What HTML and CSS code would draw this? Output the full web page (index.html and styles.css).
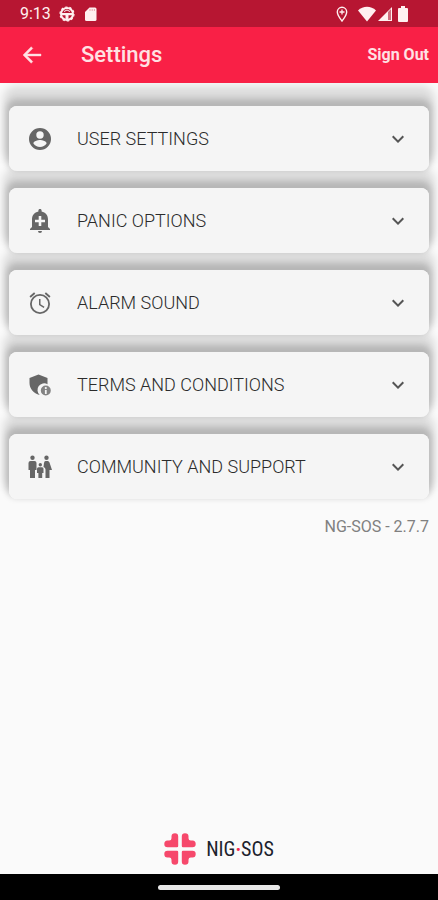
FILE: index.html
```html
<!DOCTYPE html>
<html lang="en">
<head>
<meta charset="utf-8">
<meta name="viewport" content="width=device-width, initial-scale=1">
<title>Settings</title>
<link rel="stylesheet" href="styles.css">
</head>
<body>
<div class="status-bar">
  <div class="status-group">
    <span class="clock">9:13</span>
    <svg class="status-icon" viewBox="0 0 16 16" aria-hidden="true"><circle cx="8" cy="8" r="6" fill="none" stroke="currentColor" stroke-width="2"/><circle cx="8" cy="8" r="7" fill="none" stroke="currentColor" stroke-width="1.2" stroke-dasharray="2.4 2"/><path d="M2.500 7h11v2.300H9.500V13.500h-3V9.300h-4z" fill="currentColor"/><path d="M5 5.500 8 4l3 1.500" fill="none" stroke="currentColor"/></svg>
    <svg class="status-icon" viewBox="0 0 16 16" aria-hidden="true"><path d="M6.500 1.500H12q1.500 0 1.500 1.500v10.500q0 1.500-1.500 1.500H3.500Q2 15 2 13.500V6z" fill="currentColor"/><path d="M7 3v2M9.200 3v2M11.400 3v2" stroke="#e9a5ae"/></svg>
  </div>
  <div class="status-group right">
    <svg class="status-icon" viewBox="0 0 16 16" aria-hidden="true"><path d="M8 15C5.500 11.500 3.300 9 3.300 6a4.700 4.700 0 0 1 9.400 0c0 3-2.200 5.500-4.700 9z" fill="none" stroke="currentColor" stroke-width="1.400"/><path d="M8 3.500v5M5.500 6h5" stroke="currentColor" stroke-width="1.300"/></svg>
    <svg class="wifi" viewBox="0 0 18 16" aria-hidden="true"><path d="M0 4.500C5-.5 13-.5 18 4.500L9 15.500z" fill="currentColor"/></svg>
    <svg class="status-icon" viewBox="0 0 16 16" aria-hidden="true"><path d="M1 15 15 1v14z" fill="currentColor"/><path d="M11 6v8h3V3z" fill="#cf6d7d"/></svg>
    <svg class="battery" viewBox="0 0 12 16" aria-hidden="true"><path d="M4 0h4v2h2q1 0 1 1v12q0 1-1 1H2q-1 0-1-1V3q0-1 1-1h2z" fill="currentColor"/></svg>
  </div>
</div>
<header class="app-bar">
  <button class="back" type="button" aria-label="Back"><svg viewBox="0 0 24 24" aria-hidden="true"><path d="M21 11H7.200l5.600-5.600L11.200 3.700 3 12l8.200 8.300 1.600-1.700L7.200 13H21z" fill="currentColor" stroke="currentColor" stroke-width=".4"/></svg></button>
  <h1>Settings</h1>
  <button class="sign-out" type="button">Sign Out</button>
</header>
<main>
  <div class="cards">
    <button class="card" type="button" aria-expanded="false">
      <svg class="icon" viewBox="0 0 24 24" aria-hidden="true"><path d="M12 1a11 11 0 1 0 0 22 11 11 0 0 0 0-22zm0 3.300a3.700 3.700 0 1 1 0 7.400 3.700 3.700 0 0 1 0-7.400zm0 15.700a8 8 0 0 1-6.600-3.500c0-2.200 4.400-3.400 6.600-3.400s6.600 1.200 6.600 3.400A8 8 0 0 1 12 20z"/></svg>
      <span class="label">USER SETTINGS</span>
      <svg class="chevron" viewBox="0 0 24 24" aria-hidden="true"><path d="M16.590 8.590 12 13.170 7.410 8.590 6 10l6 6 6-6z"/></svg>
    </button>
    <button class="card" type="button" aria-expanded="false">
      <svg class="icon" viewBox="0 0 24 24" aria-hidden="true"><path fill-rule="evenodd" d="M12 0c-1 0-1.600.7-1.600 1.600v1C6.500 3.400 4 6.500 4 10.500V18l-2 2v1h20v-1l-2-2v-7.500c0-4-2.500-7.100-6.400-7.900v-1C13.600.7 13 0 12 0zM10.700 7h2.600v3.700H17v2.600h-3.700V17h-2.600v-3.700H7v-2.600h3.700zM10 22a2 2 0 0 0 4 0z"/></svg>
      <span class="label">PANIC OPTIONS</span>
      <svg class="chevron" viewBox="0 0 24 24" aria-hidden="true"><path d="M16.590 8.590 12 13.170 7.410 8.590 6 10l6 6 6-6z"/></svg>
    </button>
    <button class="card" type="button" aria-expanded="false">
      <svg class="icon" viewBox="0 0 24 24" aria-hidden="true"><path d="m22.500 5.200-4.600-3.900-1.200 1.500 4.600 3.900zM7.300 2.800 6.100 1.300 1.500 5.200l1.200 1.500zM12.500 8H11v6l4.700 2.900.8-1.200-4-2.400zM12 3a10 10 0 1 0 0 20 10 10 0 0 0 0-20zm0 18.200a8.200 8.200 0 1 1 0-16.400 8.200 8.200 0 0 1 0 16.400z"/></svg>
      <span class="label">ALARM SOUND</span>
      <svg class="chevron" viewBox="0 0 24 24" aria-hidden="true"><path d="M16.590 8.590 12 13.170 7.410 8.590 6 10l6 6 6-6z"/></svg>
    </button>
    <button class="card" type="button" aria-expanded="false">
      <svg class="icon" viewBox="0 0 24 24" aria-hidden="true"><path d="M10.500 1.500 19.500 5v6.200A6.700 6.700 0 0 0 11.700 22C5.500 20.300 1.500 15.500 1.500 10V5z"/><path fill-rule="evenodd" d="M17.800 12.500a5 5 0 1 0 0 10 5 5 0 0 0 0-10zm0 1.500a1.100 1.100 0 1 1 0 2.200 1.100 1.100 0 0 1 0-2.200zm-.9 3h1.800v4h-1.800z" opacity=".8"/></svg>
      <span class="label">TERMS AND CONDITIONS</span>
      <svg class="chevron" viewBox="0 0 24 24" aria-hidden="true"><path d="M16.590 8.590 12 13.170 7.410 8.590 6 10l6 6 6-6z"/></svg>
    </button>
    <button class="card" type="button" aria-expanded="false">
      <svg class="icon" viewBox="0 0 24 24" aria-hidden="true"><circle cx="4.500" cy="2.800" r="2.200"/><circle cx="18.500" cy="2.800" r="2.200"/><circle cx="12.300" cy="9.700" r="1.700"/><path d="M2.500 6h4q2 0 2 2v7H7v8H2v-8H.5V8q0-2 2-2zM17.500 6h2.200q1.300 0 1.800 1.500L24 15h-2.500v8h-4v-8.500q0-2-2-2.600L16 8q.3-2 1.500-2zM10.500 12.200H14q1.500 0 1.500 1.500V18h-1.300v5h-3.800v-5H9v-4.300q0-1.500 1.500-1.500z"/></svg>
      <span class="label">COMMUNITY AND SUPPORT</span>
      <svg class="chevron" viewBox="0 0 24 24" aria-hidden="true"><path d="M16.590 8.590 12 13.170 7.410 8.590 6 10l6 6 6-6z"/></svg>
    </button>
  </div>
  <p class="version">NG-SOS - 2.7.7</p>
</main>
<footer class="brand">
  <svg class="brand-mark" viewBox="0 0 32 32" aria-hidden="true"><defs><path id="arm" d="M14.200 3.500V13q0 1.200-1.200 1.200H3.500Q.3 14.200.3 11 .3 7.500 3.500 7.500h1.700q2.300 0 2.300-2.300V3.500Q7.500.3 11 .3q3.200 0 3.200 3.200z"/></defs><use href="#arm"/><use href="#arm" transform="matrix(-1 0 0 1 32 0)"/><use href="#arm" transform="matrix(1 0 0 -1 0 32)"/><use href="#arm" transform="rotate(180 16 16)"/></svg>
  <span class="brand-name">NIG<span class="dot">·</span>SOS</span>
</footer>
<div class="nav-bar"><span class="handle"></span></div>
</body>
</html>
```
FILE: styles.css
```css
* { box-sizing: border-box; }

body {
  margin: 0;
  min-height: 100vh;
  display: flex;
  flex-direction: column;
  background: #fafafa;
  font-family: Roboto, "Liberation Sans", sans-serif;
}

button {
  margin: 0;
  padding: 0;
  border: 0;
  background: none;
  color: inherit;
  font: inherit;
  text-align: left;
  cursor: pointer;
}

svg { display: block; flex: none; }

.status-bar {
  position: relative;
  z-index: 1;
  display: flex;
  justify-content: space-between;
  align-items: center;
  height: 27px;
  padding: 0 29px 0 20px;
  background: #b71632;
  color: #fff0f0;
}

.status-group { display: flex; align-items: center; gap: 8px; }
.status-group.right { gap: 1px; }
.status-group.right .status-icon:first-child { margin-right: 7px; }
.clock { font-size: 16px; line-height: 20px; }
.status-icon { width: 16px; height: 16px; }
.wifi { width: 18px; height: 16px; }
.battery { width: 12px; height: 16px; margin-left: 3px; }

.app-bar {
  position: relative;
  z-index: 1;
  display: flex;
  align-items: center;
  height: 56px;
  padding: 0 9px 0 20px;
  background: #f92046;
  color: #ffe1e3;
}

.back svg { width: 24px; height: 24px; }

h1 {
  flex: 1;
  margin: 0 0 0 37px;
  font-size: 22px;
  line-height: 28px;
  font-weight: 500;
}

.sign-out { font-size: 16px; line-height: 20px; font-weight: 700; }

main { flex: 1; padding: 23px 9px 0; }

.cards {
  display: flex;
  flex-direction: column;
  gap: 17px;
  isolation: isolate;
}

.card {
  position: relative;
  display: flex;
  align-items: center;
  width: 100%;
  height: 65px;
  padding: 0 19px;
  border-radius: 8px;
  background: #f5f5f5;
  color: #2b2b2b;
}

/* Shadows sit behind every card so none darkens its neighbour. */
.card::before {
  content: "";
  position: absolute;
  inset: 0;
  z-index: -1;
  border-radius: 8px;
  box-shadow:
    0 -4px 6px 3px rgba(0, 0, 0, 0.17),
    0 -14px 8px 6px rgba(0, 0, 0, 0.12);
}

.icon { width: 24px; height: 24px; fill: #666; }

.label {
  flex: 1;
  margin-left: 25px;
  font-size: 18px;
  line-height: 24px;
  font-weight: 300;
}

.chevron { width: 24px; height: 24px; fill: #555; }

.version {
  margin: 18px 0 0;
  color: #808080;
  font-size: 16px;
  line-height: 20px;
  text-align: right;
}

.brand {
  display: flex;
  justify-content: center;
  align-items: center;
  gap: 10px;
  height: 50px;
}

.brand-mark { width: 32px; height: 32px; fill: #f6486b; }

.brand-name {
  color: #1d222d;
  font-family: "Liberation Sans Narrow", "Roboto Condensed", "DejaVu Sans Condensed", sans-serif;
  font-size: 20px;
  line-height: 28px;
  font-weight: 400;
}

.dot { color: #f6284f; font-weight: 700; }

.nav-bar {
  display: flex;
  justify-content: center;
  align-items: center;
  height: 26px;
  background: #000;
}

.handle { width: 28%; height: 5px; border-radius: 3px; background: #e8e8e8; }
```
